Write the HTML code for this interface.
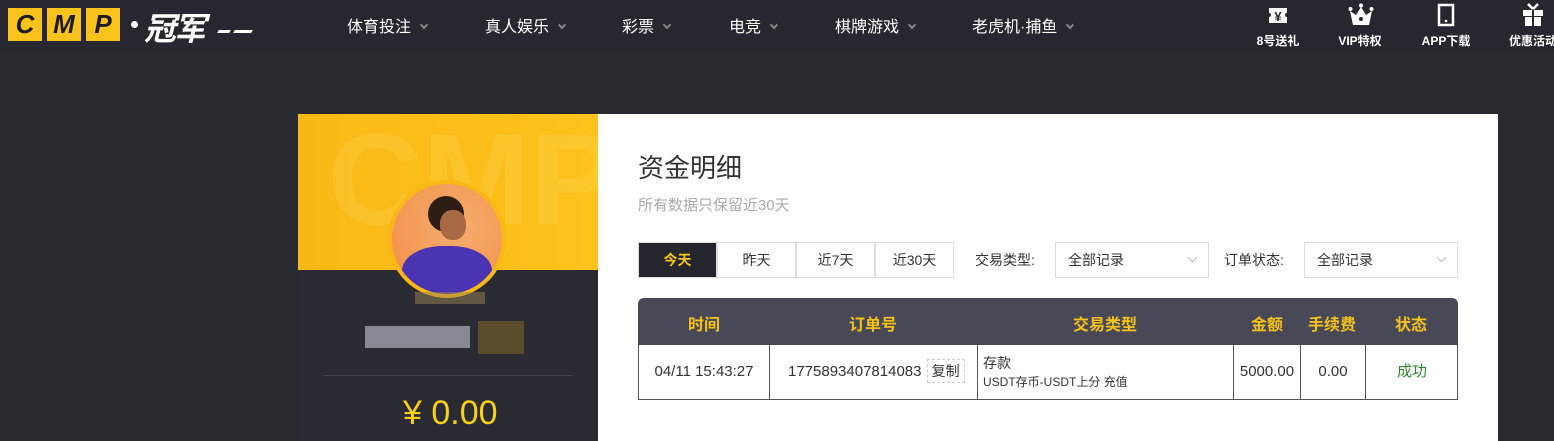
<!DOCTYPE html>
<html><head><meta charset="utf-8"><style>
*{margin:0;padding:0;box-sizing:border-box}
body{width:1554px;height:441px;overflow:hidden;background:#292930;font-family:"Liberation Sans","Noto Sans CJK SC",sans-serif;position:relative}
.a{position:absolute}
.hdr{left:0;top:0;width:1554px;height:50px;background:#27272f}
.logo b{position:absolute;top:8px;width:34px;height:33px;background:#f9c21d;color:#1c1c22;font:italic 900 26px "Liberation Sans",sans-serif;text-align:center;line-height:33px}
.nav{top:13px;color:#fff;font-size:16px}
.nav i{display:inline-block;width:6px;height:6px;border-right:2px solid #888;border-bottom:2px solid #888;transform:rotate(45deg);margin-left:10px;position:relative;top:-4px}
.ic{top:3px;width:70px;text-align:center;color:#fff;font-size:12px;font-weight:bold}
.ic div{width:24px;height:24px;margin:0 auto 5px;}
.left{left:298px;top:114px;width:300px;height:327px;background:#2b2b34}
.right{left:598px;top:114px;width:900px;height:327px;background:#fff}
.btn{top:242px;height:36px;width:79px;border:1px solid #ddd;text-align:center;line-height:34px;font-size:14px;color:#333;background:#fff}
.sel{top:242px;height:36px;border:1px solid #ddd;font-size:14px;color:#333;line-height:34px;padding-left:12px}
.sel:after{content:"";position:absolute;right:12px;top:11px;width:6px;height:6px;border-right:1px solid #bbb;border-bottom:1px solid #bbb;transform:rotate(45deg)}
.lbl{top:250px;font-size:14px;color:#333}
.th{top:298px;height:47px;background:#484857;border-radius:6px 6px 0 0;left:638px;width:820px}
.th span{position:absolute;top:13px;color:#f6c31a;font-weight:bold;font-size:16px;transform:translateX(-50%)}
.row{left:638px;top:345px;width:820px;height:55px;border:1px solid #555;border-top:none}
.row .c{position:absolute;top:0;height:54px;border-right:1px solid #555;font-size:15px;color:#333;text-align:center;line-height:54px}
</style></head><body>
<div class="a hdr"></div>
<div class="a logo" style="left:8px;top:0;width:300px;height:50px">
<b style="left:0">C</b><b style="left:39px">M</b><b style="left:78px">P</b>
<div class="a" style="left:123px;top:21px;width:7px;height:7px;border-radius:50%;background:#fff"></div>
<div class="a" style="left:136px;top:4px;color:#fff;font:italic bold 32px 'Noto Sans CJK SC',sans-serif;letter-spacing:-2px">冠军</div>
<div class="a" style="left:210px;top:30px;width:12px;height:3px;background:#fff;transform:skewX(-30deg)"></div>
<div class="a" style="left:226px;top:30px;width:18px;height:3px;background:#fff;transform:skewX(-30deg)"></div>
</div>
<div class="a nav" style="left:347px">体育投注<i></i></div>
<div class="a nav" style="left:485px">真人娱乐<i></i></div>
<div class="a nav" style="left:622px">彩票<i></i></div>
<div class="a nav" style="left:729px">电竞<i></i></div>
<div class="a nav" style="left:835px">棋牌游戏<i></i></div>
<div class="a nav" style="left:972px">老虎机·捕鱼<i></i></div>
<div class="a ic" style="left:1243px"><div><svg width="24" height="24"><path d="M3 5 H21 V10 A2 2 0 0 0 21 14 V20 H3 V14 A2 2 0 0 0 3 10Z" fill="#fff"/><text x="12" y="18" font-size="13" text-anchor="middle" fill="#27272f" font-weight="bold">¥</text></svg></div>8号送礼</div>
<div class="a ic" style="left:1325px"><div><svg width="26" height="24"><circle cx="2.5" cy="6" r="2" fill="#fff"/><circle cx="13" cy="2.5" r="2" fill="#fff"/><circle cx="23.5" cy="6" r="2" fill="#fff"/><path d="M2 8 L8 12 L13 4 L18 12 L24 8 L21 22 L5 22Z" fill="#fff"/><circle cx="13" cy="16" r="2" fill="#27272f"/></svg></div>VIP特权</div>
<div class="a ic" style="left:1411px"><div><svg width="24" height="24"><rect x="5" y="2" width="14" height="20" fill="none" stroke="#fff" stroke-width="2.5"/><circle cx="12" cy="18" r="1.3" fill="#fff"/></svg></div>APP下载</div>
<div class="a ic" style="left:1498px"><div><svg width="24" height="24"><rect x="2" y="7" width="20" height="6" fill="#fff"/><rect x="4" y="14" width="16" height="9" fill="#fff"/><rect x="11" y="6" width="2" height="17" fill="#27272f"/><path d="M12 6 L7 1 M12 6 L17 1" stroke="#fff" stroke-width="2.5"/></svg></div>优惠活动</div>

<div class="a left"></div>
<div class="a" style="left:298px;top:114px;width:300px;height:156px;background:linear-gradient(90deg,#f9b816,#fdc21c);overflow:hidden">
<div class="a" style="left:30px;top:-10px;font:bold 130px 'Liberation Sans',sans-serif;color:rgba(255,225,130,.18)">CMP</div></div>
<div class="a" style="left:388px;top:180px;width:118px;height:118px;border-radius:50%;background:#f9b816"></div>
<div class="a" style="left:392px;top:184px;width:110px;height:110px;border-radius:50%;background:radial-gradient(circle at 60% 40%,#f6ad6f,#f28c44);overflow:hidden">
<div class="a" style="left:36px;top:12px;width:36px;height:36px;border-radius:50%;background:#2e1d14"></div>
<div class="a" style="left:48px;top:26px;width:26px;height:30px;border-radius:45%;background:#a76a45"></div>
<div class="a" style="left:10px;top:62px;width:90px;height:55px;border-radius:45% 45% 0 0;background:#4b34b2"></div></div>
<div class="a" style="left:415px;top:292px;width:70px;height:12px;background:#9a8450;opacity:.5"></div>
<div class="a" style="left:365px;top:326px;width:105px;height:22px;background:#8a8a94"></div>
<div class="a" style="left:478px;top:321px;width:46px;height:33px;background:#5a4c2c"></div>
<div class="a" style="left:323px;top:375px;width:250px;height:1px;background:#44444e"></div>
<div class="a" style="left:403px;top:394px;color:#f9d117;font-size:34px">¥&nbsp;0.00</div>

<div class="a right"></div>
<div class="a" style="left:638px;top:148px;font-size:26px;color:#333">资金明细</div>
<div class="a" style="left:638px;top:194px;font-size:15px;color:#aaa">所有数据只保留近30天</div>
<div class="a btn" style="left:638px;background:#25252d;color:#f6c31a;font-weight:bold;border-color:#ddd">今天</div>
<div class="a btn" style="left:717px">昨天</div>
<div class="a btn" style="left:796px">近7天</div>
<div class="a btn" style="left:875px">近30天</div>
<div class="a lbl" style="left:975px">交易类型:</div>
<div class="a sel" style="left:1055px;width:154px">全部记录</div>
<div class="a lbl" style="left:1224px">订单状态:</div>
<div class="a sel" style="left:1304px;width:154px">全部记录</div>
<div class="a th">
<span style="left:66px">时间</span><span style="left:235px">订单号</span><span style="left:467px">交易类型</span><span style="left:629px">金额</span><span style="left:694px">手续费</span><span style="left:773px">状态</span></div>
<div class="a row">
<div class="c" style="left:0;width:131px">04/11 15:43:27</div>
<div class="c" style="left:131px;width:208px;text-align:left;padding-left:18px">1775893407814083 <span style="display:inline-block;border:1px dashed #ccc;line-height:22px;padding:0 4px;margin-left:1px;font-size:14px">复制</span></div>
<div class="c" style="left:339px;width:256px;text-align:left;padding-left:5px;line-height:18px;padding-top:9px;font-size:14px">存款<br><span style="font-size:12px">USDT存币-USDT上分 充值</span></div>
<div class="c" style="left:595px;width:67px">5000.00</div>
<div class="c" style="left:662px;width:65px">0.00</div>
<div class="c" style="left:727px;width:92px;border:none;color:#2a8a2a">成功</div>
</div>
</body></html>
